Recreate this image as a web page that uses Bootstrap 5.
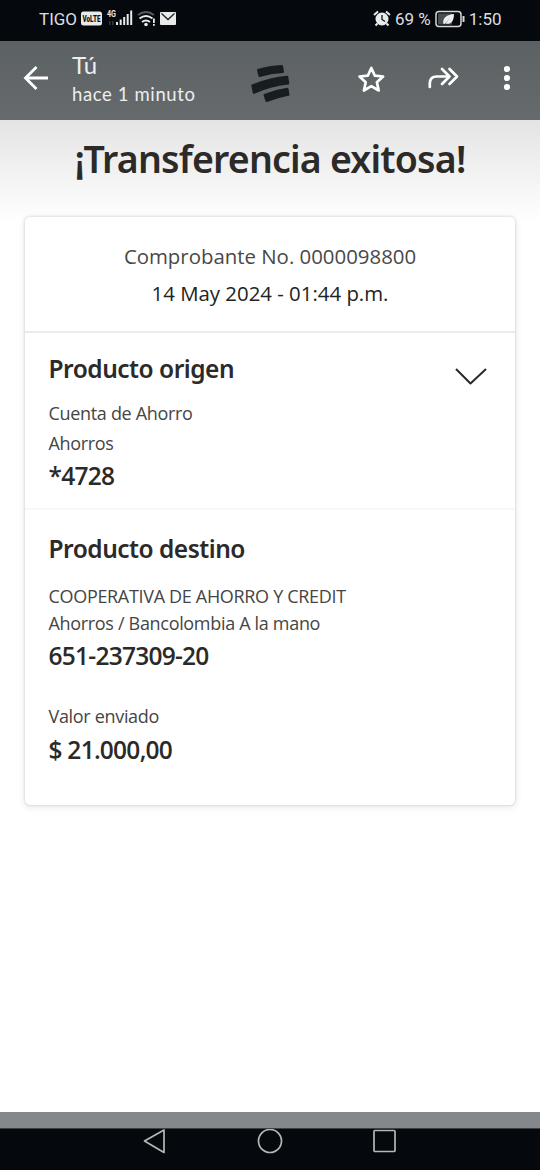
<!DOCTYPE html>
<html lang="es">
<head>
<meta charset="utf-8">
<meta name="viewport" content="width=device-width, initial-scale=1">
<title>Transferencia exitosa</title>
<link rel="stylesheet" href="https://cdn.jsdelivr.net/npm/bootstrap@5.3.0/dist/css/bootstrap.min.css">
<style>
html,body{height:1170px;overflow:hidden}
body{font-family:"Open Sans","Noto Sans",sans-serif;color:#2c2a29;background:#fff}
svg{display:block;flex:none}
.status{height:41px;background:#05090d;color:#dcdfe1;font:400 17px/1 Roboto,sans-serif;padding:0 38.5px 3px 39px}
.viewer{height:79px;background:linear-gradient(#5c6164,#666a6d);color:#fff;padding-left:23px}
.who{font-family:Lato,Roboto,sans-serif;color:#eceeef;margin-left:24px;padding-top:10px;width:176px}
.who-name{font-size:24px;line-height:28px}
.who-time{font-size:18.5px;line-height:31px;letter-spacing:.62px;white-space:nowrap}
.page{height:992px;background:linear-gradient(#e4e4e4 0,#ededed 35px,#f8f8f8 75px,#fff 102px)}
.headline{font:650 37.5px/52px "Noto Sans",sans-serif;letter-spacing:-.8px;padding-top:13px;margin:0;height:97px;white-space:nowrap}
.receipt{margin:0 25px;height:588px;background:#fff;border-radius:5px;box-shadow:0 0 2px 1px rgba(0,0,0,.09),0 2px 6px 2px rgba(0,0,0,.06)}
.rc-top{height:116px;padding-top:21px;border-bottom:2px solid #ebebeb;font-size:20.4px;line-height:36.5px;color:#222}
.rc-num{color:#484848}
.rc-mid{height:177px;padding:19px 28px 0 23.5px;border-bottom:2px solid #f7f7f7}
.rc-end{padding:22px 23.5px 0}
.sec{font:650 24.5px/34px "Noto Sans",sans-serif;letter-spacing:-.5px;margin:0}
.val{font-size:24.5px;line-height:32px;font-weight:600;letter-spacing:-.75px;padding-top:2px}
.rc-end .val{padding-top:3px}
.txt{font-size:18px;line-height:30px;color:#454545;letter-spacing:-.32px}
.tight{line-height:27px}
.first{padding-top:17px}
.amount{padding-top:29px}
.strip{height:16px;background:#85888a}
.softkeys{height:42px;background:#05090d;border-top:1px solid #3c4042;padding:0 143px}
</style>
</head>
<body class="d-flex flex-column">
<header class="status d-flex align-items-center justify-content-between">
  <div class="d-flex align-items-center">
    <span>TIGO</span>
    <svg class="ms-1" width="100" height="24" viewBox="0 0 100 24" fill="#e8eaeb">
      <rect x="0" y="4.500" width="21" height="14" rx="2.5"/>
      <text x="1.500" y="14.800" font-family="Roboto" font-weight="900" font-size="8.5" textLength="18" lengthAdjust="spacingAndGlyphs" fill="#111">VoLTE</text>
      <text x="26" y="10" font-family="Roboto" font-weight="700" font-size="9" textLength="9" lengthAdjust="spacingAndGlyphs">4G</text>
      <path d="M28 14h1.500v4h-1.500zM31 14h1.500v4h-1.500z" fill="#33383b"/>
      <path d="M35 15h2v3h-2zM38.700 12.500h2v5.500h-2zM42.200 10h2v8h-2zM45.700 7h2v11h-2zM49.200 3.500h2v14.500h-2z"/>
      <g fill="none" stroke="#e8eaeb" stroke-width="1.900"><path d="M57 8q8-6 16 0" stroke="#555b5e"/><path d="M58.500 11.500q6.500-5 13 0M61 15q4-3 8 0"/></g>
      <circle cx="65" cy="17.500" r="1.800"/><path d="M72 11.500h1.800v4.500h-1.800zM72 17h1.800v1.800h-1.800z"/>
      <rect x="79" y="5" width="16" height="13" rx="1"/><path d="M80.500 6.500l6.500 6 6.500-6" fill="none" stroke="#222" stroke-width="1.300"/>
    </svg>
  </div>
  <div class="d-flex align-items-center">
    <svg width="18" height="20" viewBox="0 0 18 20"><circle cx="9" cy="10" r="6.500" fill="#e8eaeb"/><path d="M1 6l4-3.500M17 6l-4-3.500M4.500 14.500l-2 2M13.500 14.500l2 2" stroke="#e8eaeb" stroke-width="2"/><path d="M9 6v4.500l3 2" fill="none" stroke="#111" stroke-width="1.300"/></svg>
    <span class="ms-1">69 %</span>
    <svg class="ms-1" width="30" height="18" viewBox="0 0 30 18"><rect x="1" y="1.500" width="25" height="15" rx="3" fill="#05090d" stroke="#d4d6d7" stroke-width="1.500"/><rect x="3" y="3.500" width="14" height="11" fill="#4a4e50"/><path d="M8.500 14C7 8 12 4.500 19 4c0 7-3 11-8.500 9.500l5-6-6 6.500z" fill="#eee"/><path d="M28.500 6v6" stroke="#d4d6d7" stroke-width="2"/></svg>
    <span class="ms-1">1:50</span>
  </div>
</header>
<nav class="viewer d-flex">
  <svg width="25" height="73" viewBox="0 0 25 73" fill="none" stroke="#fff" stroke-width="2.800"><path d="M25 37H3M13.500 26L2.500 37l11 11"/></svg>
  <div class="who"><div class="who-name">Tú</div><div class="who-time">hace 1 minuto</div></div>
  <svg width="292" height="79" viewBox="248 41 292 79" fill="none" stroke="#fff">
    <g fill="#171d20" stroke="#171d20" stroke-width="2" stroke-linejoin="round"><path d="M258 70q11-3.500 24-4l1 6q-12 .5-23.500 4z"/><path d="M252.300 85.500q17-7 35-8.700l1 6.700q-18 2-34.500 9.300z"/><path d="M264.500 95q11-4.500 23-6.200l1 6q-11 2-22 6.200z"/></g>
    <path stroke-width="2.700" stroke-linejoin="round" d="M371.300 68l3.500 7.700 8.300.8-6.200 5.700 1.800 8.300-7.400-4.300-7.400 4.300 1.800-8.300-6.200-5.700 8.300-.8z"/>
    <path stroke-width="2.700" stroke-linecap="round" stroke-linejoin="round" d="M429.800 87v-3.500q0-7 7-7H449M442 69l7.500 7.500-7.500 7.500M449.500 69l7.500 7.500-7.500 7.500"/>
    <g fill="#fff" stroke="none"><circle cx="507" cy="69" r="3.100"/><circle cx="507" cy="78" r="3.100"/><circle cx="507" cy="87" r="3.100"/></g>
  </svg>
</nav>
<main class="page">
  <h1 class="headline text-center">¡Transferencia exitosa!</h1>
  <section class="receipt">
    <div class="rc-top text-center"><div class="rc-num">Comprobante No. 0000098800</div><div>14 May 2024 - 01:44 p.m.</div></div>
    <div class="rc-mid d-flex justify-content-between">
      <div>
        <h2 class="sec">Producto origen</h2>
        <div class="txt mt-2 pt-1">Cuenta de Ahorro</div>
        <div class="txt">Ahorros</div>
        <div class="val">*4728</div>
      </div>
      <svg class="mt-3" width="32" height="20" viewBox="0 0 32 20" fill="none" stroke="#2c2a29" stroke-width="2"><path d="M1 1l14.500 14.500L31 1" stroke-linejoin="round"/></svg>
    </div>
    <div class="rc-end">
      <h2 class="sec">Producto destino</h2>
      <div class="txt tight first">COOPERATIVA DE AHORRO Y CREDIT</div>
      <div class="txt tight">Ahorros / Bancolombia A la mano</div>
      <div class="val">651-237309-20</div>
      <div class="txt amount">Valor enviado</div>
      <div class="val">$ 21.000,00</div>
    </div>
  </section>
</main>
<div class="strip"></div>
<footer class="softkeys d-flex justify-content-between">
<svg width="24" height="26" viewBox="0 0 24 26" fill="none" stroke="#b5b7b8" stroke-width="1.700" stroke-linejoin="round"><path d="M1.500 12L21 1v22.500z"/></svg>
<svg width="26" height="26" viewBox="0 0 26 26" fill="none" stroke="#b5b7b8" stroke-width="1.700"><circle cx="13" cy="12" r="11.500"/></svg>
<svg width="24" height="26" viewBox="0 0 24 26" fill="none" stroke="#b5b7b8" stroke-width="1.700"><rect x="1" y="1.500" width="21" height="21" rx="1"/></svg>
</footer>
<script src="https://cdn.jsdelivr.net/npm/bootstrap@5.3.0/dist/js/bootstrap.bundle.min.js"></script>
</body>
</html>
